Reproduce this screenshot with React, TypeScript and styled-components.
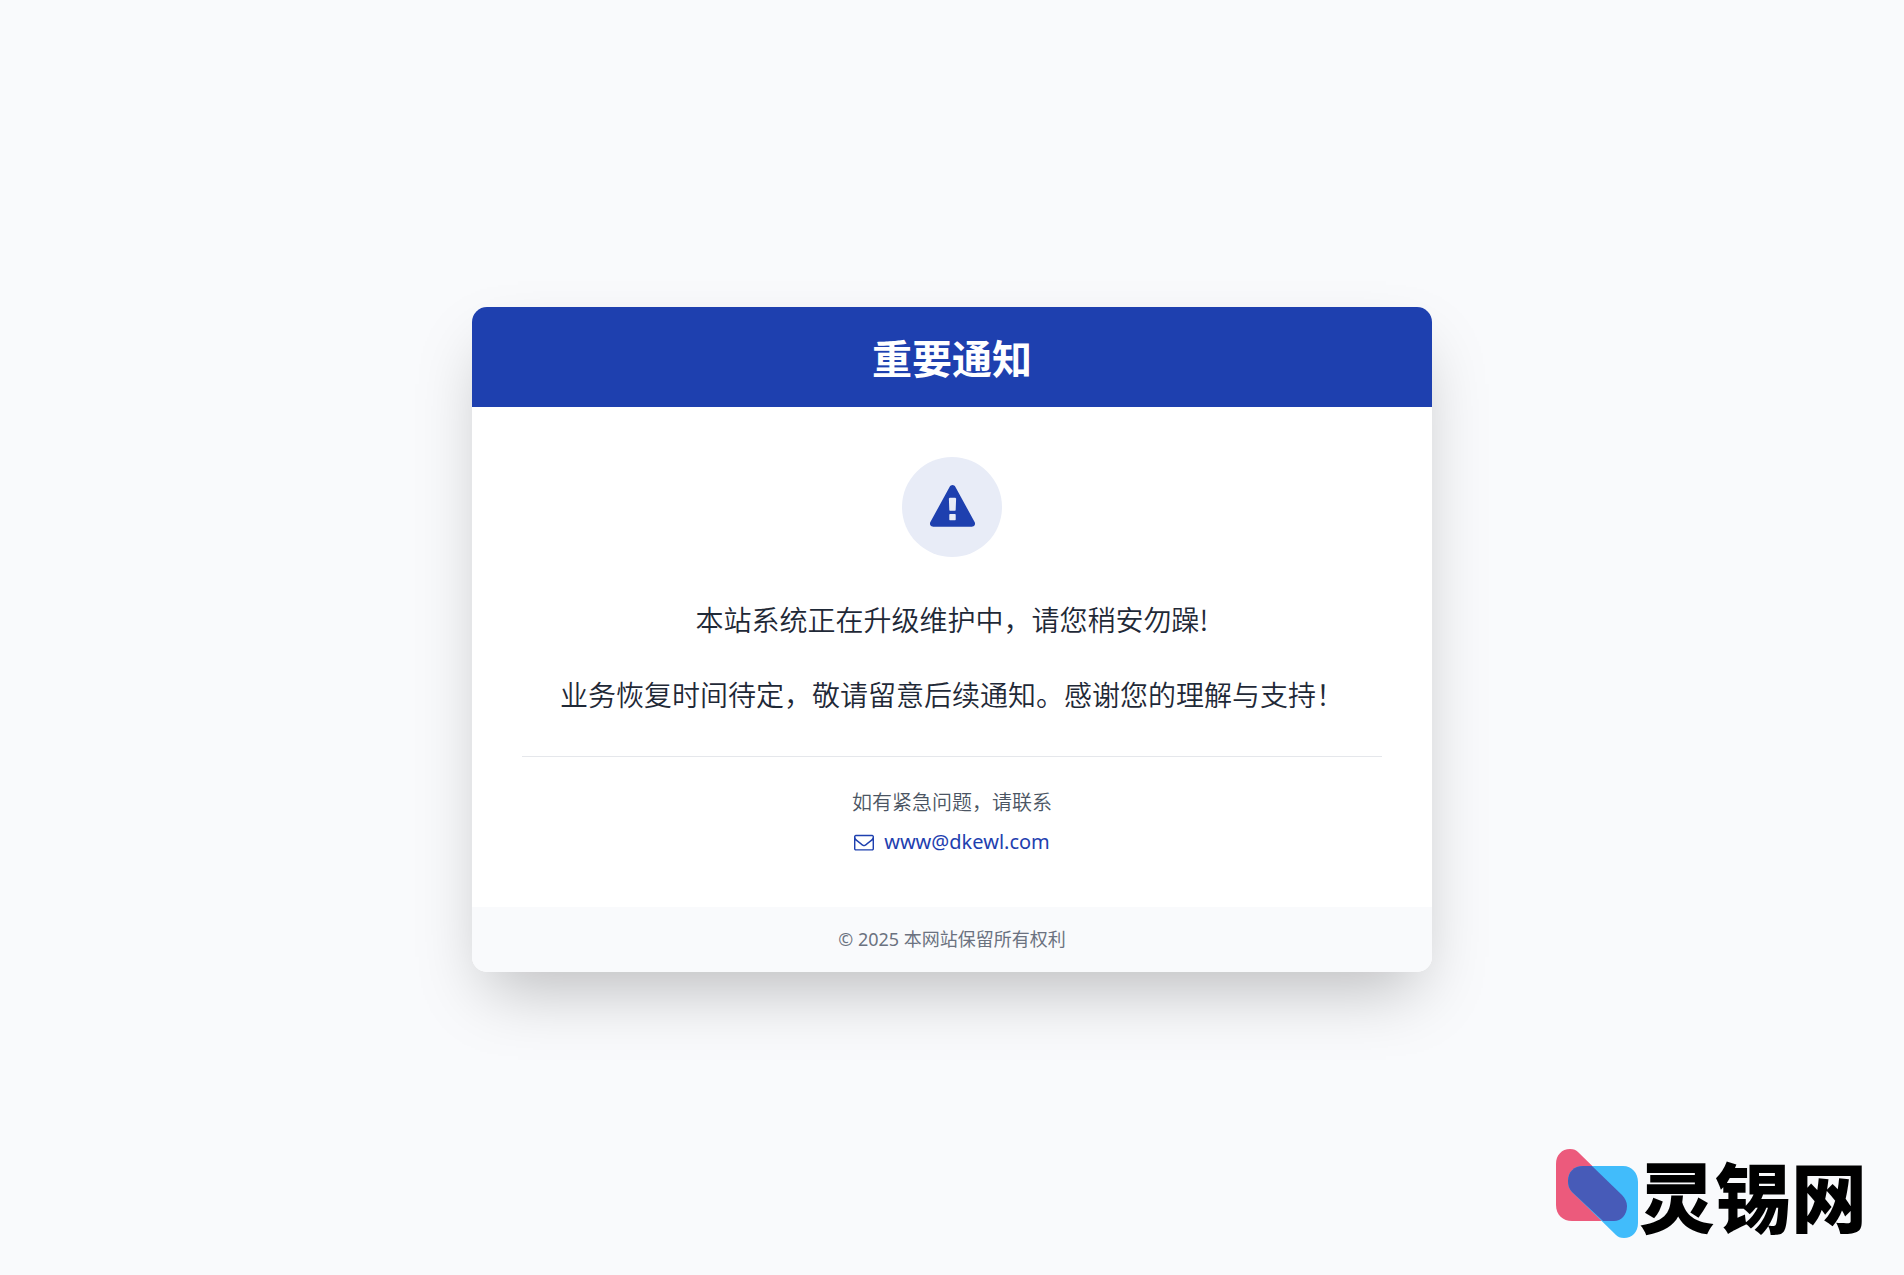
import React from "react";
import styled, { createGlobalStyle } from "styled-components";

const color = {
  page: "#f9fafc",
  primary: "#1e40af",
  primarySoft: "#e8ecf7",
  text: "#1f2937",
  muted: "#4b5563",
  faint: "#6b7280",
  line: "#e5e7eb",
};

const GlobalStyle = createGlobalStyle`
  *, *::before, *::after { box-sizing: border-box; }
  body {
    margin: 0;
    background: ${color.page};
    color: ${color.text};
    font-family: "Noto Sans", "Noto Sans CJK SC", sans-serif;
  }
  h1, p { margin: 0; }
`;

const Page = styled.div`
  min-height: 100vh;
  display: flex;
  align-items: center;
  justify-content: center;
  padding: 24px 20px 20px;
`;

const Card = styled.main`
  width: 100%;
  max-width: 960px;
  overflow: hidden;
  border-radius: 15px;
  background: #fff;
  box-shadow: 0 31px 63px -15px rgba(0, 0, 0, 0.25);
  text-align: center;
`;

const Header = styled.header`
  padding: 25px;
  background: ${color.primary};
  color: #fff;
`;

const Title = styled.h1`
  font-family: "Noto Sans CJK SC", sans-serif;
  font-size: 40px;
  line-height: 50px;
  font-weight: 700;
`;

const Body = styled.div`
  display: flex;
  flex-direction: column;
  gap: 37px;
  padding: 50px;
`;

const IconCircle = styled.div`
  display: flex;
  align-items: center;
  justify-content: center;
  align-self: center;
  width: 100px;
  height: 100px;
  border-radius: 50%;
  background: ${color.primarySoft};
  color: ${color.primary};
`;

const Message = styled.div`
  display: flex;
  flex-direction: column;
  gap: 25px;
  font-family: "Noto Sans CJK SC", sans-serif;
  font-size: 28px;
  line-height: 50px;
  font-weight: 350;
`;

const Contact = styled.div`
  display: flex;
  flex-direction: column;
  align-items: center;
  gap: 10px;
  padding-top: 30px;
  border-top: 1px solid ${color.line};
  font-size: 20px;
  line-height: 30px;
`;

const ContactLabel = styled.p`
  color: ${color.muted};
  font-family: "Noto Sans CJK SC", sans-serif;
  font-weight: 350;
`;

const MailLink = styled.a`
  display: inline-flex;
  align-items: center;
  gap: 10px;
  color: ${color.primary};
  text-decoration: none;
  &:hover { text-decoration: underline; }
`;

const Footer = styled.footer`
  padding: 20px;
  background: ${color.page};
  color: ${color.faint};
  font-size: 18px;
  line-height: 25px;
`;

const Brand = styled.div`
  position: fixed;
  right: 37px;
  bottom: 36px;
  display: flex;
  align-items: center;
  color: #000;
`;

const BrandName = styled.span`
  font-family: "Noto Sans CJK SC", sans-serif;
  font-size: 76px;
  line-height: 90px;
  font-weight: 900;
`;

const WarningIcon = () => (
  <svg width="45" height="45" viewBox="0 0 1792 1792" fill="currentColor" aria-hidden="true">
    <path d="M1024 1375v-190q0-14-9.5-23.5t-22.5-9.5h-192q-13 0-22.5 9.5t-9.5 23.5v190q0 14 9.5 23.5t22.5 9.5h192q13 0 22.5-9.5t9.5-23.5zm-2-374l18-459q0-12-10-19-13-11-24-11h-220q-11 0-24 11-10 7-10 21l17 457q0 10 10 16.5t24 6.5h185q14 0 23.5-6.5t10.5-16.5zm-14-934l768 1408q35 63-2 126-17 29-46.5 46t-63.5 17h-1536q-34 0-63.5-17t-46.5-46q-37-63-2-126l768-1408q17-31 47-49t65-18 65 18 47 49z" />
  </svg>
);

const EnvelopeIcon = () => (
  <svg width="20" height="20" viewBox="0 0 1792 1792" fill="currentColor" aria-hidden="true">
    <path d="M1664 1504v-768q-32 36-69 66-268 206-426 338-51 43-83 67t-86.5 48.5-102.5 24.5h-2q-48 0-102.5-24.5t-86.5-48.5-83-67q-158-132-426-338-37-30-69-66v768q0 13 9.5 22.5t22.5 9.5h1472q13 0 22.5-9.5t9.5-22.5zm0-1051v-24.5l-.5-13-3-12.5-5.5-9-9-7.5-14-2.5h-1472q-13 0-22.5 9.5t-9.5 22.5q0 168 147 284 193 152 401 317 6 5 35 29.5t46 37.5 44.5 31.5 50.5 27.5 43 9h2q20 0 43-9t50.5-27.5 44.5-31.5 46-37.5 35-29.5q208-165 401-317 54-43 100.5-115.5t46.5-131.5zm128-37v1088q0 66-47 113t-113 47h-1472q-66 0-113-47t-47-113v-1088q0-66 47-113t113-47h1472q66 0 113 47t47 113z" />
  </svg>
);

const BrandMark = () => (
  <svg width="83" height="90" viewBox="0 0 83 90" aria-hidden="true">
    <path
      fill="#ec5a7c"
      d="M0 15C0 6 6 0 14 0c4 0 6 1 8 3L66 46c3 3 5 7 5 11 0 9-6 15-13 15H16C7 72 0 66 0 56Z"
    />
    <path
      fill="#41bcfb"
      d="M27 17H67c9 0 15 7 15 16V74c0 9-6 15-14 15-4 0-6-1-8-3L16 43c-3-3-4-7-4-11 0-9 6-15 15-15Z"
    />
    <path
      fill="#475bb8"
      d="M27 17H36L66 46c3 3 5 7 5 11 0 9-6 15-13 15H47L16 43c-3-3-4-7-4-11 0-9 6-15 15-15Z"
    />
  </svg>
);

export default function App() {
  return (
    <>
      <GlobalStyle />
      <Page>
        <Card>
          <Header>
            <Title>重要通知</Title>
          </Header>
          <Body>
            <IconCircle>
              <WarningIcon />
            </IconCircle>
            <Message>
              <p>本站系统正在升级维护中，请您稍安勿躁!</p>
              <p>业务恢复时间待定，敬请留意后续通知。感谢您的理解与支持！</p>
            </Message>
            <Contact>
              <ContactLabel>如有紧急问题，请联系</ContactLabel>
              <MailLink href="mailto:www@dkewl.com">
                <EnvelopeIcon />
                www@dkewl.com
              </MailLink>
            </Contact>
          </Body>
          <Footer>© 2025 本网站保留所有权利</Footer>
        </Card>
      </Page>
      <Brand>
        <BrandMark />
        <BrandName>灵锡网</BrandName>
      </Brand>
    </>
  );
}
